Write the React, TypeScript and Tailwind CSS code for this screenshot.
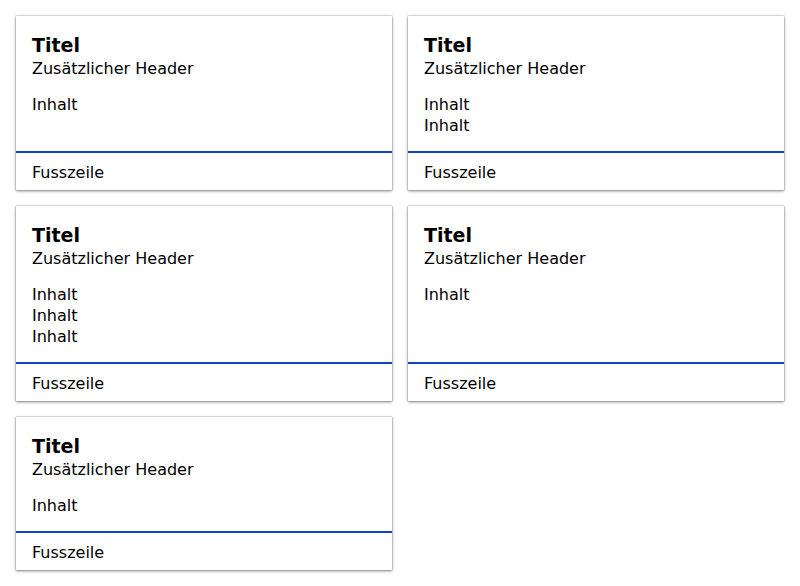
const cards = [1, 2, 3, 1, 1]

function Card({ lines }: { lines: number }) {
  return (
    <div className="flex flex-col bg-white shadow-[0_0_1px_rgba(0,0,0,0.6),0_1px_3px_rgba(0,0,0,0.45)]">
      <div className="flex-1 px-4 pt-4 pb-[15px]">
        <h2 className="text-[19px] leading-[26px] font-bold">Titel</h2>
        <p className="leading-[21px]">Zusätzlicher Header</p>
        <div className="mt-[15px] leading-[21px]">
          {Array.from({ length: lines }).map((_, i) => (
            <p key={i}>Inhalt</p>
          ))}
        </div>
      </div>
      <div className="border-t-2 border-[#0f42c6] px-4 pt-[9px] pb-[7px] leading-[21px]">
        Fusszeile
      </div>
    </div>
  )
}

export default function App() {
  return (
    <div
      className="grid grid-cols-2 items-stretch gap-4 p-4 text-[16px] text-black bg-white"
      style={{ fontFamily: '"DejaVu Sans", Verdana, sans-serif' }}
    >
      {cards.map((n, i) => (
        <Card key={i} lines={n} />
      ))}
    </div>
  )
}
